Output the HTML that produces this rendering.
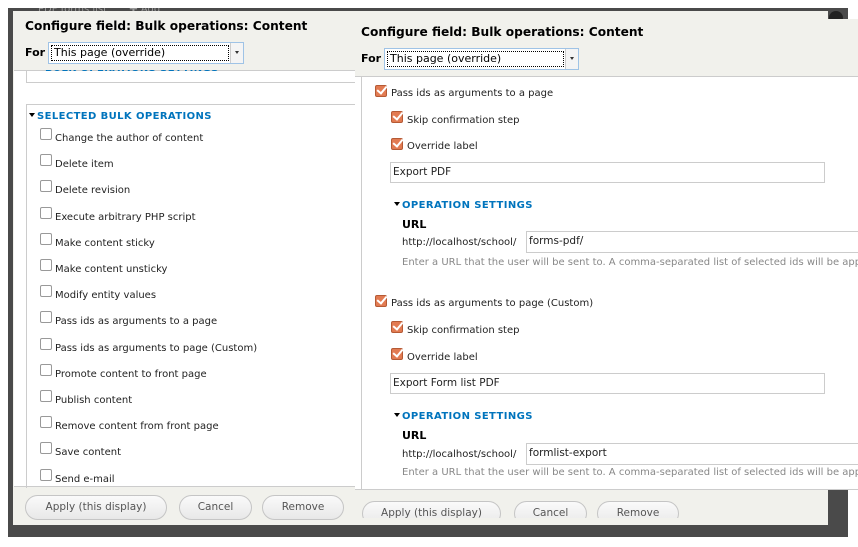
<!DOCTYPE html>
<html><head><meta charset="utf-8"><style>
*{margin:0;padding:0;box-sizing:border-box}
body{width:858px;height:547px;position:relative;overflow:hidden;background:#fff;font-family:"DejaVu Sans","Liberation Sans",sans-serif;font-size:10px;color:#222}
.a{position:absolute}
.dark{background:#4a4a4a}
.hdr{background:#f1f1ec}
.title{font-weight:bold;font-size:12.2px;color:#000;white-space:nowrap}
.for{font-weight:bold;font-size:11px;color:#000}
.sel{background:#fff;border:1px solid #9fc3e6;height:20px}
.sel .in{position:absolute;left:2px;top:2px;bottom:2px;right:14px;border:1px dotted #000;font-size:11px;line-height:13px;padding-left:2px;color:#000;white-space:nowrap}
.sel .ar{position:absolute;right:0;top:0;bottom:0;width:13px;border-left:1px solid #ccc;background:#f4f4f4}
.sel .ar:after{content:"";position:absolute;left:4px;top:8px;border:2px solid transparent;border-top:3px solid #333}
.cb{position:absolute;width:12px;height:12px;border:1px solid #999;border-radius:2px;background:#fff}
.ck{position:absolute;width:12px;height:12px;border:1px solid #b55a35;border-radius:2px;background:#e27b52}
.ck:after{content:"";position:absolute;left:3px;top:-2px;width:4px;height:8px;border:solid #fff;border-width:0 2px 2px 0;transform:rotate(40deg)}
.t{position:absolute;white-space:nowrap;line-height:13px}
.leg{position:absolute;color:#0074bd;font-weight:bold;font-size:10px;letter-spacing:0.4px;white-space:nowrap}
.leg:before{content:"";display:inline-block;border:3px solid transparent;border-top:4px solid #000;margin-right:2px;vertical-align:-1px}
.inp{position:absolute;border:1px solid #ccc;background:#fff;font-size:10.5px;padding-left:2px;line-height:19px;color:#222;white-space:nowrap}
.btn{position:absolute;height:25px;border:1px solid #c5c5c5;border-radius:13px;background:linear-gradient(#fafafa,#e8e8e8);color:#555;font-size:10.5px;text-align:center;line-height:23px;white-space:nowrap}
.desc{position:absolute;color:#888;font-size:10px;white-space:nowrap}
</style></head><body>
<div class="a dark" style="left:8px;top:8px;width:840px;height:529px"></div>
<div class="t" style="left:38px;top:3px;color:#999;font-size:10px">PDF forms list &nbsp;&nbsp;&nbsp;&nbsp;&nbsp; ✚ Add</div>
<div class="a" style="left:0;top:0;width:858px;height:8px;background:#fff"></div>
<div class="a" style="left:829px;top:11px;width:14px;height:14px;border-radius:7px;background:#222"></div>

<!-- left dialog -->
<div class="a hdr" style="left:13px;top:11px;width:815px;height:514px"></div>
<div class="a" style="left:14px;top:70px;width:814px;height:417px;background:#fff;border-top:1px solid #ccc;border-bottom:1px solid #ccc"></div>
<div class="a" style="left:26px;top:60px;width:340px;height:23px;border:1px solid #ccc;border-top:none"></div>
<div class="leg" style="left:37px;top:63px;clip-path:inset(7px 0 0 0)">BULK OPERATIONS SETTINGS</div>
<div class="a hdr" style="left:13px;top:11px;width:815px;height:59px"></div>
<div class="a title" style="left:25px;top:19px">Configure field: Bulk operations: Content</div>
<div class="a for" style="left:25px;top:46px">For</div>
<div class="a sel" style="left:48px;top:42px;width:196px;height:22px"><div class="in">This page (override)</div><div class="ar"></div></div>
<div class="a" style="left:26px;top:104px;width:340px;height:400px;border:1px solid #ccc"></div>
<div class="leg" style="left:29px;top:111px">SELECTED BULK OPERATIONS</div>

<div class="cb" style="left:40px;top:128px"></div><div class="t" style="left:55px;top:132px">Change the author of content</div>
<div class="cb" style="left:40px;top:154px"></div><div class="t" style="left:55px;top:158px">Delete item</div>
<div class="cb" style="left:40px;top:180px"></div><div class="t" style="left:55px;top:184px">Delete revision</div>
<div class="cb" style="left:40px;top:207px"></div><div class="t" style="left:55px;top:211px">Execute arbitrary PHP script</div>
<div class="cb" style="left:40px;top:233px"></div><div class="t" style="left:55px;top:237px">Make content sticky</div>
<div class="cb" style="left:40px;top:259px"></div><div class="t" style="left:55px;top:263px">Make content unsticky</div>
<div class="cb" style="left:40px;top:285px"></div><div class="t" style="left:55px;top:289px">Modify entity values</div>
<div class="cb" style="left:40px;top:311px"></div><div class="t" style="left:55px;top:315px">Pass ids as arguments to a page</div>
<div class="cb" style="left:40px;top:338px"></div><div class="t" style="left:55px;top:342px">Pass ids as arguments to page (Custom)</div>
<div class="cb" style="left:40px;top:364px"></div><div class="t" style="left:55px;top:368px">Promote content to front page</div>
<div class="cb" style="left:40px;top:390px"></div><div class="t" style="left:55px;top:394px">Publish content</div>
<div class="cb" style="left:40px;top:416px"></div><div class="t" style="left:55px;top:420px">Remove content from front page</div>
<div class="cb" style="left:40px;top:442px"></div><div class="t" style="left:55px;top:446px">Save content</div>
<div class="cb" style="left:40px;top:469px"></div><div class="t" style="left:55px;top:473px">Send e-mail</div>
<div class="a hdr" style="left:13px;top:488px;width:815px;height:37px"></div>
<div class="btn" style="left:25px;top:495px;width:142px">Apply (this display)</div>
<div class="btn" style="left:179px;top:495px;width:73px">Cancel</div>
<div class="btn" style="left:262px;top:495px;width:82px">Remove</div>

<!-- right dialog -->
<div class="a hdr" style="left:355px;top:19px;width:503px;height:58px;border-bottom:1px solid #ccc"></div>
<div class="a title" style="left:361px;top:25px">Configure field: Bulk operations: Content</div>
<div class="a for" style="left:361px;top:52px">For</div>
<div class="a sel" style="left:384px;top:48px;width:195px;height:22px"><div class="in">This page (override)</div><div class="ar"></div></div>
<div class="a" style="left:355px;top:77px;width:503px;height:413px;background:#fff;border-bottom:1px solid #ccc;overflow:hidden">
<div class="a" style="left:0;top:0;width:7px;height:413px;border-right:1px solid #ccc"></div>
</div>

<div class="ck" style="left:375px;top:85px"></div><div class="t" style="left:391px;top:87px">Pass ids as arguments to a page</div>
<div class="ck" style="left:391px;top:111px"></div><div class="t" style="left:407px;top:114px">Skip confirmation step</div>
<div class="ck" style="left:391px;top:138px"></div><div class="t" style="left:407px;top:140px">Override label</div>
<div class="inp" style="left:390px;top:162px;width:435px;height:21px">Export PDF</div>
<div class="leg" style="left:394px;top:200px">OPERATION SETTINGS</div>
<div class="t" style="left:402px;top:218px;font-weight:bold;font-size:11px;color:#000">URL</div>
<div class="t" style="left:402px;top:236px">http://localhost/school/</div>
<div class="inp" style="left:526px;top:231px;width:332px;height:22px;border-right:none">forms-pdf/</div>
<div class="desc" style="left:402px;top:257px">Enter a URL that the user will be sent to. A comma-separated list of selected ids will be appended.</div>

<div class="ck" style="left:375px;top:295px"></div><div class="t" style="left:391px;top:297px">Pass ids as arguments to page (Custom)</div>
<div class="ck" style="left:391px;top:321px"></div><div class="t" style="left:407px;top:324px">Skip confirmation step</div>
<div class="ck" style="left:391px;top:348px"></div><div class="t" style="left:407px;top:351px">Override label</div>
<div class="inp" style="left:390px;top:373px;width:435px;height:21px">Export Form list PDF</div>
<div class="leg" style="left:394px;top:411px">OPERATION SETTINGS</div>
<div class="t" style="left:402px;top:429px;font-weight:bold;font-size:11px;color:#000">URL</div>
<div class="t" style="left:402px;top:448px">http://localhost/school/</div>
<div class="inp" style="left:526px;top:443px;width:332px;height:22px;border-right:none">formlist-export</div>
<div class="desc" style="left:402px;top:467px">Enter a URL that the user will be sent to. A comma-separated list of selected ids will be appended.</div>

<div class="a" style="left:355px;top:491px;width:473px;height:27px;overflow:hidden">
<div class="btn" style="left:7px;top:10px;width:139px">Apply (this display)</div>
<div class="btn" style="left:159px;top:10px;width:73px">Cancel</div>
<div class="btn" style="left:242px;top:10px;width:82px">Remove</div>
</div>
<div class="a" style="left:848px;top:491px;width:10px;height:56px;background:#fff"></div>
</body></html>
